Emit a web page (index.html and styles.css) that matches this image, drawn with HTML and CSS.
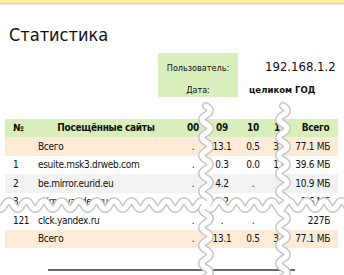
FILE: index.html
```html
<!DOCTYPE html>
<html lang="ru">
<head>
<meta charset="utf-8">
<title>Статистика</title>
<link rel="stylesheet" href="styles.css">
</head>
<body>
<div class="topbar"></div>
<h1 class="title">Статистика</h1>
<div class="info">
  <div class="lbl">Пользователь:</div><div class="val ip">192.168.1.2</div>
  <div class="lbl">Дата:</div><div class="val period">целиком ГОД</div>
</div>
<table class="stats">
  <colgroup>
    <col class="c-num"><col class="c-site"><col class="c-h00"><col class="c-h09"><col class="c-h10"><col class="c-h11"><col class="c-total">
  </colgroup>
  <thead>
    <tr class="head"><th class="num">№</th><th>Посещённые сайты</th><th>00</th><th>09</th><th>10</th><th>11</th><th>Всего</th></tr>
  </thead>
  <tbody>
    <tr class="sum"><td class="num"></td><td class="site">Всего</td><td>.</td><td>13.1</td><td>0.5</td><td>3.5</td><td class="tot">77.1 МБ</td></tr>
    <tr><td class="num">1</td><td class="site">esuite.msk3.drweb.com</td><td>.</td><td>0.3</td><td>0.0</td><td>1.4</td><td class="tot">39.6 МБ</td></tr>
    <tr class="alt"><td class="num">2</td><td class="site">be.mirror.eurid.eu</td><td>.</td><td>4.2</td><td>.</td><td></td><td class="tot">10.9 МБ</td></tr>
    <tr><td class="num">3</td><td class="site">mirror.yandex.ru</td><td>.</td><td>0.2</td><td>.</td><td></td><td class="tot">1.6 МБ</td></tr>
    <tr><td class="num">121</td><td class="site">clck.yandex.ru</td><td>.</td><td>.</td><td>.</td><td></td><td class="tot">227Б</td></tr>
    <tr class="sum"><td class="num"></td><td class="site">Всего</td><td>.</td><td>13.1</td><td>0.5</td><td>3.5</td><td class="tot">77.1 МБ</td></tr>
  </tbody>
</table>
<div class="axis"></div>
<svg class="tears" width="344" height="275" viewBox="0 0 344 275" aria-hidden="true">
  <g fill="none" stroke="#c6c6c6" stroke-width="8" stroke-linecap="round">
    <path d="M -12.9 205 q 4.375 -8 8.75 0 t 8.75 0 t 8.75 0 t 8.75 0 t 8.75 0 t 8.75 0 t 8.75 0 t 8.75 0 t 8.75 0 t 8.75 0 t 8.75 0 t 8.75 0 t 8.75 0 t 8.75 0 t 8.75 0 t 8.75 0 t 8.75 0 t 8.75 0 t 8.75 0 t 8.75 0 t 8.75 0 t 8.75 0 t 8.75 0 t 8.75 0 t 8.75 0 t 8.75 0 t 8.75 0 t 8.75 0 t 8.75 0 t 8.75 0 t 8.75 0 t 8.75 0 t 8.75 0 t 8.75 0 t 8.75 0 t 8.75 0 t 8.75 0 t 8.75 0 t 8.75 0 t 8.75 0 t 8.75 0"/>
    <path d="M 206 106 q 8 4.5 0 9 t 0 9 t 0 9 t 0 9 t 0 9 t 0 9 t 0 9 t 0 9 t 0 9 t 0 9 t 0 9 t 0 9 t 0 9 t 0 9 t 0 9 t 0 9 t 0 9 t 0 9 t 0 9 t 0 9"/>
    <path d="M 283 106 q 8 4.5 0 9 t 0 9 t 0 9 t 0 9 t 0 9 t 0 9 t 0 9 t 0 9 t 0 9 t 0 9 t 0 9 t 0 9 t 0 9 t 0 9 t 0 9 t 0 9 t 0 9 t 0 9 t 0 9 t 0 9"/>
  </g>
  <g fill="none" stroke="#ffffff" stroke-width="5" stroke-linecap="round">
    <path d="M -12.9 205 q 4.375 -8 8.75 0 t 8.75 0 t 8.75 0 t 8.75 0 t 8.75 0 t 8.75 0 t 8.75 0 t 8.75 0 t 8.75 0 t 8.75 0 t 8.75 0 t 8.75 0 t 8.75 0 t 8.75 0 t 8.75 0 t 8.75 0 t 8.75 0 t 8.75 0 t 8.75 0 t 8.75 0 t 8.75 0 t 8.75 0 t 8.75 0 t 8.75 0 t 8.75 0 t 8.75 0 t 8.75 0 t 8.75 0 t 8.75 0 t 8.75 0 t 8.75 0 t 8.75 0 t 8.75 0 t 8.75 0 t 8.75 0 t 8.75 0 t 8.75 0 t 8.75 0 t 8.75 0 t 8.75 0 t 8.75 0"/>
    <path d="M 206 106 q 8 4.5 0 9 t 0 9 t 0 9 t 0 9 t 0 9 t 0 9 t 0 9 t 0 9 t 0 9 t 0 9 t 0 9 t 0 9 t 0 9 t 0 9 t 0 9 t 0 9 t 0 9 t 0 9 t 0 9 t 0 9"/>
    <path d="M 283 106 q 8 4.5 0 9 t 0 9 t 0 9 t 0 9 t 0 9 t 0 9 t 0 9 t 0 9 t 0 9 t 0 9 t 0 9 t 0 9 t 0 9 t 0 9 t 0 9 t 0 9 t 0 9 t 0 9 t 0 9 t 0 9"/>
  </g>
</svg>
</body>
</html>
```
FILE: styles.css
```css
html, body {
  margin: 0;
  padding: 0;
  background: #ffffff;
}
body {
  position: relative;
  width: 344px;
  height: 275px;
  overflow: hidden;
  font-family: "DejaVu Sans Condensed", "DejaVu Sans", sans-serif;
  font-stretch: condensed;
  color: #111111;
}
.topbar {
  height: 3px;
  background: #fcef9e;
  box-shadow: 0 1px 2px #bdbdbd;
}
.title {
  margin: 21px 0 0 9px;
  font-size: 18px;
  line-height: 21px;
  font-weight: normal;
  color: #111111;
}
.info {
  display: grid;
  grid-template-columns: 80px auto;
  grid-auto-rows: 22px;
  margin: 8px 0 0 158px;
}
.lbl {
  background: #d9efbb;
  text-align: center;
  font-size: 9px;
  line-height: 14px;
  padding-top: 8px;
}
.val {
  padding-left: 11px;
  font-size: 9.5px;
  line-height: 14px;
  padding-top: 8px;
}
.val.ip {
  padding-left: 27px;
  padding-top: 7px;
  font-size: 13px;
}
.val.period {
  font-weight: bold;
}
.stats {
  margin: 21.5px 0 0 5px;
  width: 333px;
  border-collapse: collapse;
  table-layout: fixed;
  font-size: 10px;
  letter-spacing: -0.3px;
}
.c-num { width: 26px; }
.c-site { width: 150px; }
.c-h00 { width: 24px; }
.c-h09 { width: 34px; }
.c-h10 { width: 28px; }
.c-h11 { width: 26px; }
.c-total { width: 45px; }
.stats th, .stats td {
  height: 18.5px;
  padding: 0;
  text-align: center;
  white-space: nowrap;
  overflow: hidden;
}
.stats th {
  font-weight: bold;
}
.stats .head {
  background: #d9efbb;
}
.stats .sum {
  background: #fdead7;
}
.stats .alt {
  background: #f2f2f2;
}
.stats .num {
  text-align: left;
  padding-left: 8px;
}
.stats .site {
  text-align: left;
  padding-left: 7px;
}
.stats .tot {
  text-align: right;
  padding-right: 8px;
}
.axis {
  margin: 21px 0 0 48px;
  width: 247px;
  height: 1.5px;
  background: #6a6a6a;
}
.tears {
  position: absolute;
  left: 0;
  top: 0;
  pointer-events: none;
}
```
